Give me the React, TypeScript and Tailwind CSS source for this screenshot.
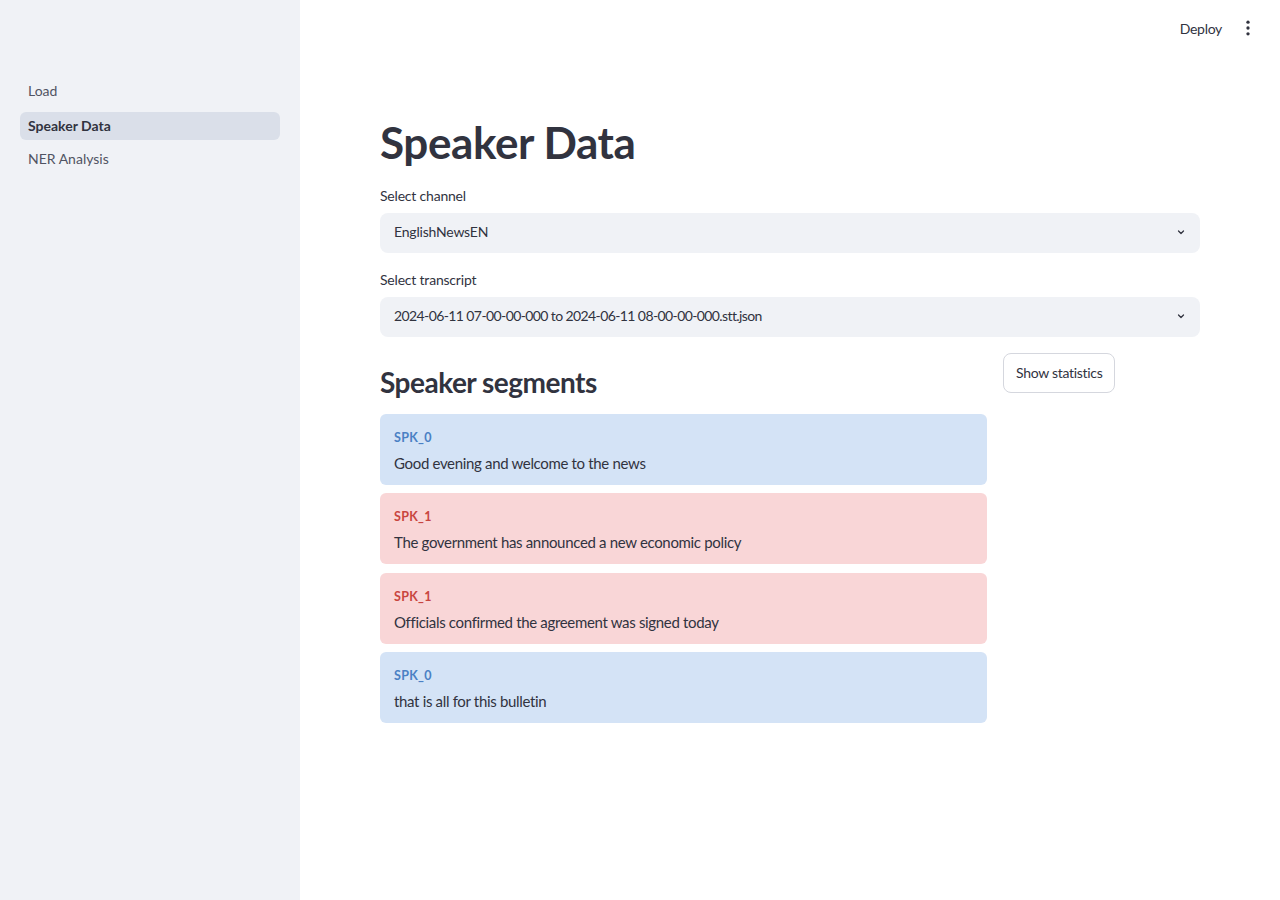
import React from "react";

const FONT = { fontFamily: "Lato, 'Noto Sans', sans-serif" };

function Chevron() {
  return (
    <svg width="12" height="12" viewBox="0 0 24 24" fill="none" stroke="#31333f" strokeWidth="2.5" strokeLinecap="round" strokeLinejoin="round">
      <path d="M7 10l5 5 5-5" />
    </svg>
  );
}

function Select({ label, value, tight }: { label: string; value: string; tight?: boolean }) {
  return (
    <div className="flex flex-col">
      <div className="h-[20px] text-[14px] leading-[20px] tracking-[-0.2px] text-[#31333f]">{label}</div>
      <div className="mt-[7px] flex h-[40px] items-center justify-between rounded-lg bg-[#f0f2f6] pl-[14px] pr-[13px]">
        <span className={"pb-[4px] text-[14px] text-[#31333f] " + (tight ? "tracking-[-0.6px]" : "tracking-[-0.2px]")}>{value}</span>
        <span className="pb-[2px]">
          <Chevron />
        </span>
      </div>
    </div>
  );
}

type Seg = { spk: string; text: string };
const segs: Seg[] = [
  { spk: "SPK_0", text: "Good evening and welcome to the news" },
  { spk: "SPK_1", text: "The government has announced a new economic policy" },
  { spk: "SPK_1", text: "Officials confirmed the agreement was signed today" },
  { spk: "SPK_0", text: "that is all for this bulletin" },
];

export default function App() {
  return (
    <div className="flex min-h-[900px] w-full bg-white text-[#31333f]" style={FONT}>
      <aside className="w-[300px] shrink-0 bg-[#f0f2f6] px-5 pt-[78px]">
        <nav className="flex flex-col gap-[6px]">
          <div className="flex h-[28px] items-center rounded-md px-2 pb-[3px] text-[14px] text-[#505463]">Load</div>
          <div className="flex h-[28px] items-center rounded-md bg-[#dadfe9] px-2 pb-[2px] text-[14px] font-bold text-[#31333f]">Speaker Data</div>
          <div className="flex h-[28px] items-center rounded-md px-2 pb-[3px] text-[14px] text-[#505463]">NER Analysis</div>
        </nav>
      </aside>
      <main className="flex flex-1 flex-col">
        <header className="flex h-[58px] items-center justify-end gap-[16px] pb-[2px] pr-[22px]">
          <span className="text-[14px] tracking-[-0.3px] text-[#31333f]">Deploy</span>
          <svg width="20" height="20" viewBox="0 0 24 24" fill="#31333f">
            <circle cx="12" cy="5" r="2" />
            <circle cx="12" cy="12" r="2" />
            <circle cx="12" cy="19" r="2" />
          </svg>
        </header>
        <div className="flex flex-col px-[80px] pt-[58px]">
          <h1 className="h-[53px] text-[44px] font-bold leading-[53px] tracking-[-0.4px] text-[#31333f]">Speaker Data</h1>
          <div className="mt-[17px]">
            <Select label="Select channel" value="EnglishNewsEN" />
          </div>
          <div className="mt-[17px]">
            <Select label="Select transcript" value="2024-06-11 07-00-00-000 to 2024-06-11 08-00-00-000.stt.json" tight />
          </div>
          <div className="mt-[16px] flex gap-[16px]">
            <div className="flex w-[607px] flex-col">
              <h3 className="pt-[12px] text-[28px] font-bold leading-[34px] tracking-[-0.5px] text-[#31333f]">Speaker segments</h3>
              <div className="mt-[15px] flex flex-col gap-[8.4px]">
                {segs.map((s, i) => {
                  const blue = s.spk === "SPK_0";
                  return (
                    <div
                      key={i}
                      className={
                        "flex h-[71px] flex-col rounded-md px-[14px] pt-[16px] " +
                        (blue ? "bg-[#d4e3f6]" : "bg-[#f9d6d7]")
                      }
                    >
                      <span className={"text-[12.5px] font-bold leading-[16px] tracking-[0.3px] " + (blue ? "text-[#4a80c4]" : "text-[#c8453f]")}>
                        {s.spk}
                      </span>
                      <span className="mt-[6px] text-[15px] leading-[22px] tracking-[-0.33px] text-[#31333f]">{s.text}</span>
                    </div>
                  );
                })}
              </div>
            </div>
            <div className="flex flex-1 items-start">
              <button className="flex h-[40px] items-center rounded-lg border border-[#d5d7de] bg-white px-[12px] pb-[2px] text-[14px] tracking-[-0.3px] text-[#31333f]">
                Show statistics
              </button>
            </div>
          </div>
        </div>
      </main>
    </div>
  );
}
